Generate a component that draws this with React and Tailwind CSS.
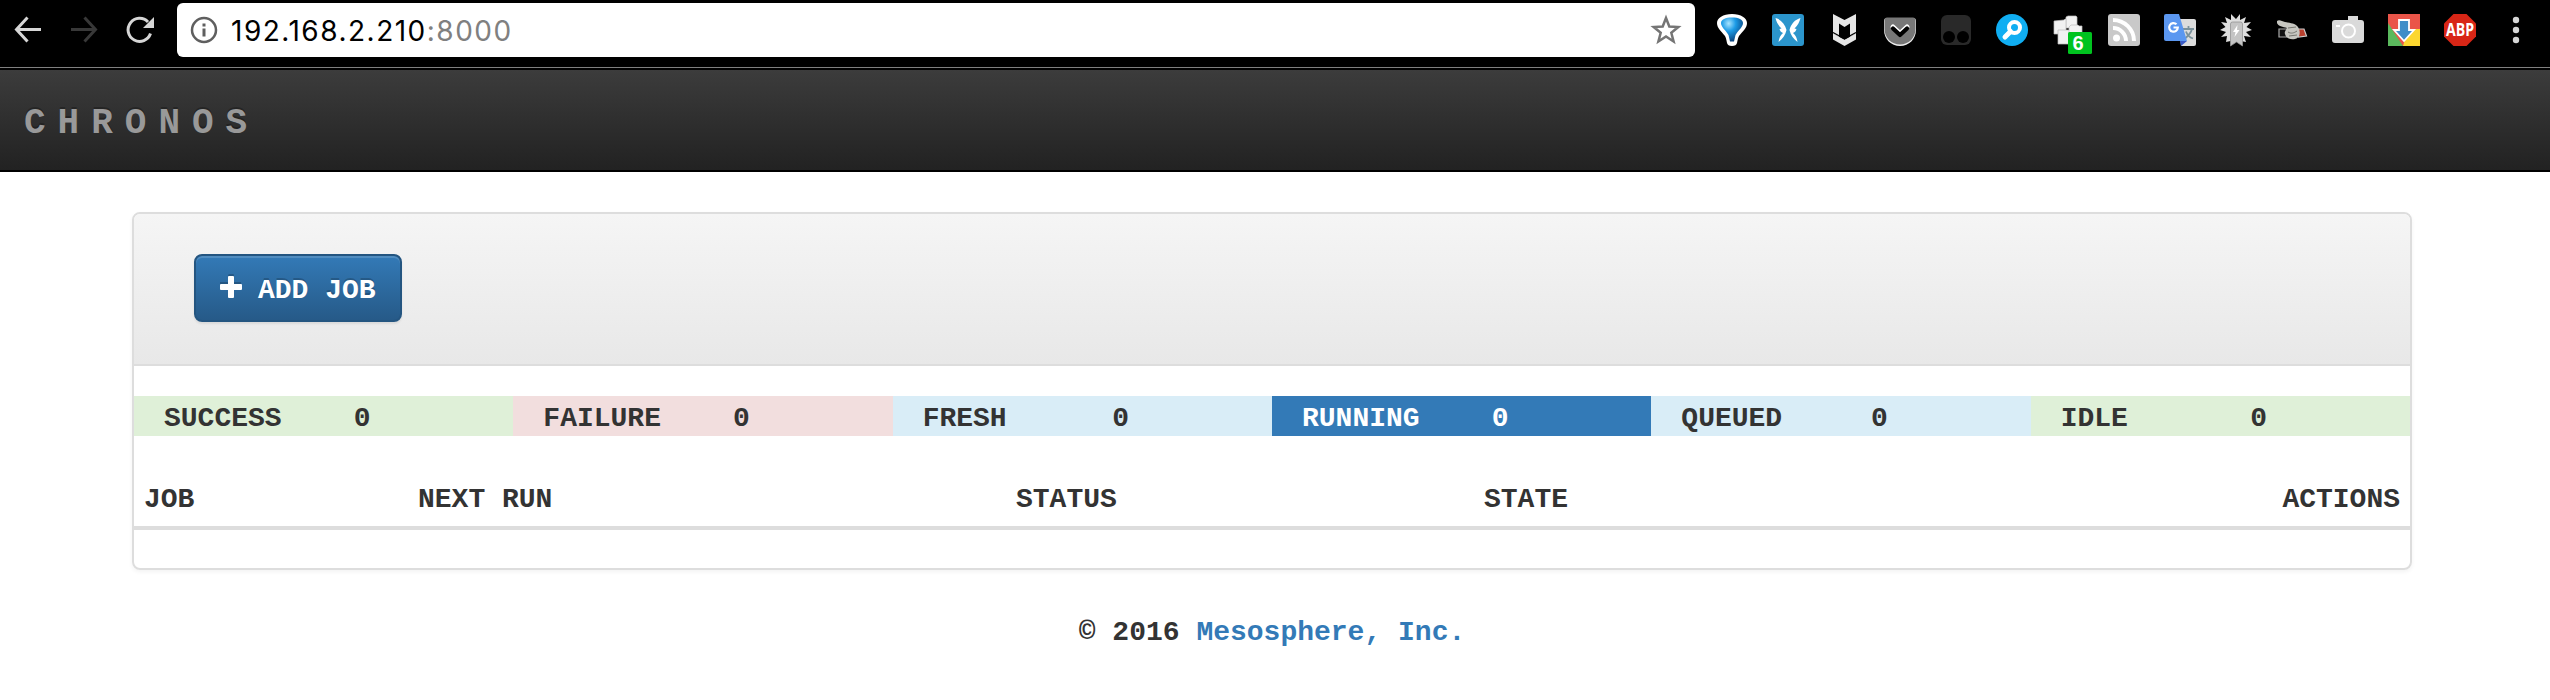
import React from "react";

function Ext({ children }) {
  return (
    <svg className="h-8 w-8 shrink-0 overflow-visible" viewBox="0 0 32 32">
      {children}
    </svg>
  );
}

function NavIcon({ children, className }) {
  return (
    <svg className={"h-8 w-8 shrink-0 " + className} viewBox="0 0 32 32" fill="none" stroke="currentColor" strokeWidth="3">
      {children}
    </svg>
  );
}

function Extensions() {
  return (
    <div className="ml-[21px] flex items-center gap-6">
      <Ext>
        <defs>
          <radialGradient id="balloon" cx="0.35" cy="0.25" r="0.8">
            <stop offset="0" stopColor="#a8e4ff" />
            <stop offset="0.4" stopColor="#1c9be6" />
            <stop offset="1" stopColor="#063a74" />
          </radialGradient>
        </defs>
        <path d="M16 0C7 0 1 4 1 9c0 5 4 8 8 13 1.500 3 1.500 5 2 7 .5 2 2 3 5 3s4.500-1 5-3c.5-2 .5-4 2-7 4-5 8-8 8-13 0-5-6-9-15-9z" fill="#fff" />
        <path d="M16 3.500C9.500 3.500 5 5.500 5 9c0 4 4.500 7 7.500 12l1.500 6.500h4l1.500-6.500C22.500 16 27 13 27 9c0-3.500-4.500-5.500-11-5.500z" fill="url(#balloon)" />
      </Ext>
      <Ext>
        <rect width="32" height="32" rx="3" fill="#2b95cc" />
        <path d="M3.500 4C9 5.500 13 10 14.500 16c-1 5-4 9-8 12 .5-4 2-7 4.500-9-2-1-3-2-3.500-4l2-.5C6 11 4.500 8 3.500 4z" fill="#fff" />
        <path d="M28.500 4C23 5.500 19 10 17.500 16c1 5 4 9 8 12-.5-4-2-7-4.500-9 2-1 3-2 3.500-4l-2-.5c3.500-3.500 5-6.500 6-10.500z" fill="#fff" />
      </Ext>
      <Ext>
        <path d="M5 0l11.500 6L28 0v20l-6 3V9.500l-5.500 3.500L11 9.500V23l-6-3z" fill="#e6e6e6" />
        <path d="M5 19.500l11.500 6.300L28 19.500v6L16.500 32 5 25.500z" fill="#e6e6e6" />
        <path d="M5 18.500l11.500 6.300L28 18.500" fill="none" stroke="#000" strokeWidth="1.300" />
      </Ext>
      <Ext>
        <path d="M0 7c0-2 1-3 3-3h26c2 0 3 1 3 3v9c0 9-7 16-16 16S0 25 0 16z" fill="#eee" />
        <path d="M.5 6.500C.5 4.500 1.500 3.500 3 3.500h26c1.500 0 2.500 1 2.500 3V15c0 9-7 15.500-15.500 15.500S.5 24 .5 15z" fill="#777" />
        <path d="M9 13l7 6.500 7-6.500" fill="none" stroke="#fff" strokeWidth="5" strokeLinecap="round" strokeLinejoin="round" />
        <path d="M9 14.500l7 6.500 7-6.500" fill="none" stroke="#000" strokeWidth="4.200" strokeLinecap="round" strokeLinejoin="round" />
      </Ext>
      <Ext>
        <rect x="1" y="1" width="30" height="30" rx="6" fill="#292929" />
        <circle cx="9" cy="23" r="6" fill="#000" />
        <circle cx="23" cy="23" r="6" fill="#000" />
      </Ext>
      <Ext>
        <circle cx="16" cy="16" r="16" fill="#10aef2" />
        <circle cx="18.500" cy="13.500" r="5.500" fill="none" stroke="#fff" strokeWidth="4" />
        <path d="M14.500 17.500L9 23" stroke="#fff" strokeWidth="5" strokeLinecap="round" />
      </Ext>
      <Ext>
        <g fill="#f2f2f2" stroke="#bbb" strokeWidth="0.700">
          <path d="M14 3l2-1h8l1 1v11H14z" />
          <path d="M2 7l10-1 1-1h1v15H2z" />
          <path d="M6 16h13v14H6z" />
          <path d="M17 13l2-2h7l1 1h3v10H17z" />
        </g>
        <rect x="16" y="18" width="24" height="22" rx="1.500" fill="#00c31f" />
        <text x="26" y="36" textAnchor="middle" className="font-['Liberation_Sans'] text-[20px] font-bold" fill="#fff">6</text>
      </Ext>
      <Ext>
        <rect width="32" height="32" rx="3" fill="#c9c9c9" />
        <circle cx="8.500" cy="24" r="3.500" fill="#fff" />
        <path d="M5 14a13 13 0 0 1 13 13M5 6a21 21 0 0 1 21 21" fill="none" stroke="#fff" strokeWidth="4" />
      </Ext>
      <Ext>
        <path d="M14 5h16a2 2 0 0 1 2 2v23a2 2 0 0 1-2 2H17z" fill="#dcdcdc" />
        <path d="M19 15h11M24.500 12v3M28 15c-1 4-4 7-7 9.500M22 17.500c1 3 4 6 7 7" fill="none" stroke="#7b929c" strokeWidth="1.800" />
        <path d="M16 27h7l-6 5z" fill="#3a5bc7" />
        <path d="M2 0h13l8 27H2a2 2 0 0 1-2-2V2a2 2 0 0 1 2-2z" fill="#5b97f0" />
        <path d="M12.500 10.300a4.300 4.300 0 1 0 1.300 3.200H9.500" fill="none" stroke="#fff" strokeWidth="2.200" />
      </Ext>
      <Ext>
        <path d="M16 5l4-5 0 6 6-3-2 6 7-1-4.500 5 5.500 3-6 2 5 5-7-1 2 6-11-2-9 2 1-6-6 1 5-5-6-2 5.500-3L1 8l6 1-2-6 6 3 0-6z" fill="#dedede" />
        <path d="M10.500 10q0-2 2-2h8q2 0 2 2v22L16.500 28l-6 4z" fill="#c4c4c4" stroke="#949494" strokeWidth="0.800" />
        <path d="M17.500 11l-4.500 7h2.500l-1 5 5-7h-2.500z" fill="#fff" />
      </Ext>
      <Ext>
        <path d="M3 15h8v8H3z" fill="#111" stroke="#aaa" strokeWidth="1.200" />
        <path d="M21 15h7l2.500 7-8 1z" fill="#b8402e" stroke="#ccc" strokeWidth="1.200" />
        <path d="M1 7c2-2 5 0 8 1 5 1 10 1 13 5 3 5 2 11-3 12-5 1-9-1-10-5-1-2 1-4 2-6-4-1-9-2-10-5z" fill="#c6c6c0" />
        <path d="M12 14l8-1M12 18c3 2 6 1 9-1M13 22l8-1" fill="none" stroke="#777770" strokeWidth="1" />
      </Ext>
      <Ext>
        <path d="M3 6h13V2h10v4h3a3 3 0 0 1 3 3v17a3 3 0 0 1-3 3H3a3 3 0 0 1-3-3V9a3 3 0 0 1 3-3z" fill="#dadada" />
        <circle cx="16.500" cy="17" r="6.500" fill="none" stroke="#fff" strokeWidth="2" />
        <path d="M4 12h4" stroke="#fff" strokeWidth="2" />
      </Ext>
      <Ext>
        <rect width="32" height="32" fill="#ea5549" />
        <path d="M0 9l15 23H0z" fill="#5bb95d" />
        <path d="M20 15h12v17H15z" fill="#fcd72f" />
        <path d="M11 6h10v10h5L16 27 6 16h5z" fill="#3f8dc8" stroke="#fff" strokeWidth="1.800" />
      </Ext>
      <Ext>
        <path d="M9.500 0h13L32 9.500v13L22.500 32h-13L0 22.500v-13z" fill="#d82616" />
        <text x="2" y="22" textLength="28" lengthAdjust="spacingAndGlyphs" className="font-['Open_Sans'] text-[17px] font-bold" fill="#fff">ABP</text>
      </Ext>
      <Ext>
        <g fill="#d6d6d6">
          <circle cx="16" cy="6" r="3.200" />
          <circle cx="16" cy="16" r="3.200" />
          <circle cx="16" cy="26" r="3.200" />
        </g>
      </Ext>
    </div>
  );
}

function Toolbar() {
  return (
    <div className="flex h-[67px] items-start bg-black pt-[3px]">
      <div className="flex h-[54px] w-full items-center pl-3">
        <div className="flex gap-6">
          <NavIcon className="text-[#d6d6d6]">
            <path d="M29 15.500H5M15.500 3.500L4.500 15.500l11 12" />
          </NavIcon>
          <NavIcon className="text-[#383838]">
            <path d="M3 15.500h24M16.500 3.500l11 12-11 12" />
          </NavIcon>
          <NavIcon className="text-[#d6d6d6]">
            <path d="M26.500 19.500A11.500 11.500 0 1 1 24 8" />
            <path d="M30 3v11H19z" fill="currentColor" stroke="none" />
          </NavIcon>
        </div>
        <div className="ml-[21px] flex h-[54px] w-[1518px] shrink-0 items-center rounded-[6px] bg-white pl-[13px] pr-[13px]">
          <svg className="h-7 w-7 shrink-0" viewBox="0 0 28 28">
            <circle cx="14" cy="14" r="12" fill="none" stroke="#5f5f5f" strokeWidth="2.500" />
            <path d="M14 7.500v3M14 12.500v8" stroke="#5f5f5f" strokeWidth="3" />
          </svg>
          <span className="ml-[13px] whitespace-nowrap pt-[2px] font-['Inter',sans-serif] text-[28px] font-normal leading-none tracking-[1.500px] text-black">
            192.168.2.210<span className="text-[#808080]">:8000</span>
          </span>
          <svg className="ml-auto h-8 w-8 shrink-0" viewBox="0 0 32 32">
            <path d="M16 4l3.300 8.500 9 .5-7 5.700 2.300 8.800L16 22.500l-7.600 5 2.300-8.800-7-5.700 9-.5z" fill="none" stroke="#757575" strokeWidth="2.500" />
          </svg>
        </div>
        <Extensions />
      </div>
    </div>
  );
}

const statuses = [
  { label: "SUCCESS", count: 0, tone: "bg-[#dff0d8]" },
  { label: "FAILURE", count: 0, tone: "bg-[#f2dede]" },
  { label: "FRESH", count: 0, tone: "bg-[#d9edf7]" },
  { label: "RUNNING", count: 0, tone: "bg-[#337ab7] text-white" },
  { label: "QUEUED", count: 0, tone: "bg-[#d9edf7]" },
  { label: "IDLE", count: 0, tone: "bg-[#dff0d8]" },
];

export default function App() {
  return (
    <div className="min-h-[700px] bg-white font-['Liberation_Mono',monospace] text-[28px] font-bold leading-10 text-[#333]">
      <Toolbar />
      <header className="flex h-[105px] items-center border-t border-[#808080] bg-black pb-[2px] pt-[2px]">
        <div className="flex h-[100px] w-full items-center bg-linear-to-b from-[#3c3c3c] to-[#222] pl-[24px] pt-[8px] text-[36px] tracking-[12px] text-[#999] [text-shadow:0_-2px_0_rgba(0,0,0,0.250)]">
          CHRONOS
        </div>
      </header>
      <main className="ml-[132px] mt-10 w-[2280px]">
        <section className="h-[358px] overflow-hidden rounded-lg border-2 border-[#ddd] shadow-[0_2px_4px_rgba(0,0,0,0.050)]">
          <div className="flex h-[152px] items-start border-b-2 border-[#ddd] bg-linear-to-b from-[#f5f5f5] to-[#e8e8e8] pl-[60px] pt-10">
            <button className="flex h-[68px] w-[208px] items-center rounded-lg border-2 border-[#245580] bg-linear-to-b from-[#337ab7] to-[#265a88] pl-6 font-bold text-white shadow-[inset_0_2px_0_rgba(255,255,255,0.150),0_2px_2px_rgba(0,0,0,0.075)] [text-shadow:0_-2px_0_rgba(0,0,0,0.200)]">
              <svg className="h-6 w-[24px] shrink-0 overflow-visible" viewBox="0 0 24 24">
                <path d="M9 -2h4a1 1 0 0 1 1 1v7h7v4H0V6h8V-1z" fill="#000" opacity="0.200" />
                <path d="M9 0h4a1 1 0 0 1 1 1v7h7a1 1 0 0 1 1 1v4a1 1 0 0 1-1 1h-7v7a1 1 0 0 1-1 1H9a1 1 0 0 1-1-1v-7H1a1 1 0 0 1-1-1V9a1 1 0 0 1 1-1h7V1a1 1 0 0 1 1-1z" fill="#fff" />
              </svg>
              <span className="ml-[14px] whitespace-nowrap pt-[6px]">ADD JOB</span>
            </button>
          </div>
          <div className="mt-[30px] grid h-10 grid-cols-6">
            {statuses.map((s) => (
              <div key={s.label} className={"grid h-10 grid-cols-2 pt-[5px] leading-[35px] " + s.tone}>
                <span className="pl-[30px]">{s.label}</span>
                <span className="pl-[30px]">{s.count}</span>
              </div>
            ))}
          </div>
          <div className="flex h-[94px] items-end border-b-4 border-[#ddd] px-[10px] pb-[6px]">
            <span className="w-[274px]">JOB</span>
            <span className="w-[598px]">NEXT RUN</span>
            <span className="w-[468px]">STATUS</span>
            <span>STATE</span>
            <span className="ml-auto">ACTIONS</span>
          </div>
        </section>
        <footer className="mt-10 pt-[3px] text-center">
          © 2016 <a className="text-[#337ab7]">Mesosphere, Inc.</a>
        </footer>
      </main>
    </div>
  );
}
